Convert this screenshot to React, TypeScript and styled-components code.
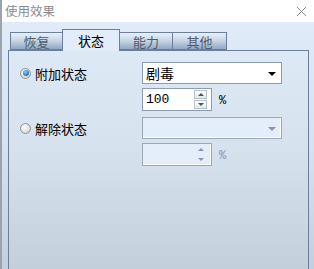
import React from "react";
import styled, { createGlobalStyle } from "styled-components";

const Global = createGlobalStyle`
  html, body { margin: 0; padding: 0; }
  body {
    width: 314px; height: 269px; overflow: hidden;
    font-family: "Noto Sans CJK SC", "Noto Sans", sans-serif;
  }
`;

const Window = styled.div`
  width: 314px;
  height: 269px;
  display: flex;
  flex-direction: column;
  box-sizing: border-box;
  border-left: 2px solid #9aa3ae;
  overflow: hidden;
`;

const TitleBar = styled.div`
  height: 22px;
  flex: none;
  background: #ffffff;
  display: flex;
  align-items: center;
  justify-content: space-between;
  padding: 0 7px 0 3px;
  color: #8a8a8a;
  font-size: 12.5px;
  line-height: 22px;
`;

const Body = styled.div`
  flex: 1;
  background: linear-gradient(#dfebf8 0%, #d6e2ed 50%, #c3d0dc 100%);
  padding: 7px 5px 0 6px;
  display: flex;
  flex-direction: column;
`;

const TabRow = styled.div`
  display: flex;
  align-items: flex-end;
  height: 21px;
  padding-left: 2px;
  position: relative;
  z-index: 1;
`;

const Tab = styled.div<{ $active?: boolean; $w: number }>`
  box-sizing: border-box;
  width: ${(p) => p.$w}px;
  height: ${(p) => (p.$active ? 22 : 18)}px;
  margin-bottom: ${(p) => (p.$active ? -1 : 0)}px;
  margin-left: -1px;
  &:first-child { margin-left: 0; }
  border: 1px solid #6b7f9d;
  border-bottom: ${(p) => (p.$active ? "none" : "1px solid #6b7f9d")};
  background: ${(p) =>
    p.$active
      ? "#e2edf9"
      : "linear-gradient(#e8f0f7 0%, #c9d8e6 45%, #8fa8c2 100%)"};
  color: ${(p) => (p.$active ? "#000" : "#4f5d6e")};
  font-size: 13px;
  display: flex;
  align-items: center;
  justify-content: center;
  line-height: 1;
  position: relative;
  z-index: ${(p) => (p.$active ? 2 : 1)};
`;

const Panel = styled.div`
  flex: 1;
  border: 1px solid #6b7f9d;
  border-bottom: none;
  padding-top: 11px;
  display: flex;
  flex-direction: column;
  gap: 6px;
`;

const Section = styled.div`
  display: grid;
  grid-template-columns: 133px 140px;
  row-gap: 4px;
`;

const RadioLabel = styled.label`
  display: flex;
  align-items: center;
  padding-left: 11px;
  font-size: 13px;
  color: #000;
  gap: 4px;
`;

const RadioDot = styled.span<{ $checked?: boolean }>`
  width: 11px;
  height: 11px;
  box-sizing: border-box;
  border-radius: 50%;
  border: 1px solid #8e949b;
  background: radial-gradient(circle at 40% 35%, #ffffff 0%, #e6e6e6 50%, #c4c4c4 100%);
  display: flex;
  align-items: center;
  justify-content: center;
  &::after {
    content: "";
    display: ${(p) => (p.$checked ? "block" : "none")};
    width: 6px;
    height: 6px;
    border-radius: 50%;
    background: radial-gradient(circle at 40% 35%, #8fd0ff 0%, #2f83d0 55%, #14508f 100%);
  }
`;

const Select = styled.div<{ $disabled?: boolean }>`
  box-sizing: border-box;
  height: 22px;
  border: 1px solid ${(p) => (p.$disabled ? "#9aa8b9" : "#8d9db0")};
  background: ${(p) => (p.$disabled ? "#e3eefa" : "#ffffff")};
  box-shadow: ${(p) => (p.$disabled ? "inset -1px -1px 0 #ffffff" : "none")};
  display: flex;
  align-items: center;
  justify-content: space-between;
  padding: 0 5px 0 3px;
  font-size: 14px;
  color: #000;
`;

const Arrow = styled.span<{ $disabled?: boolean }>`
  width: 0;
  height: 0;
  border-left: 4px solid transparent;
  border-right: 4px solid transparent;
  border-top: 4px solid ${(p) => (p.$disabled ? "#8c90b6" : "#000")};
  margin-top: 1px;
`;

const SpinRow = styled.div`
  grid-column: 2;
  display: flex;
  align-items: center;
  gap: 7px;
`;

const Spin = styled.div<{ $disabled?: boolean }>`
  box-sizing: border-box;
  width: 70px;
  height: 23px;
  border: 1px solid ${(p) => (p.$disabled ? "#9aa8b9" : "#8d9db0")};
  background: ${(p) => (p.$disabled ? "#e3eefa" : "#ffffff")};
  box-shadow: ${(p) => (p.$disabled ? "inset -1px -1px 0 #ffffff" : "none")};
  display: flex;
  align-items: center;
  justify-content: space-between;
  padding: 0 4px 0 3px;
  font-family: "Liberation Mono", monospace;
  font-size: 13px;
  color: #000;
`;

const SpinButtons = styled.div`
  display: flex;
  flex-direction: column;
  gap: 1px;
`;

const SpinBtn = styled.div<{ $disabled?: boolean }>`
  box-sizing: border-box;
  width: 13px;
  height: 9px;
  border: 1px solid ${(p) => (p.$disabled ? "transparent" : "#b8c2cc")};
  background: ${(p) => (p.$disabled ? "transparent" : "linear-gradient(#ffffff, #e4e8ec)")};
  display: flex;
  align-items: center;
  justify-content: center;
`;

const Tri = styled.span<{ $up?: boolean; $disabled?: boolean }>`
  width: 0;
  height: 0;
  border-left: 3px solid transparent;
  border-right: 3px solid transparent;
  ${(p) => (p.$up ? "border-bottom" : "border-top")}: 3px solid ${(p) =>
    p.$disabled ? "#8c90b6" : "#4a5563"};
`;

const Percent = styled.span<{ $disabled?: boolean }>`
  font-family: "Liberation Mono", monospace;
  font-size: 12px;
  color: ${(p) => (p.$disabled ? "#8c90b6" : "#000")};
  margin-top: 2px;
`;

const CloseIcon = () => (
  <svg width="11" height="11" viewBox="0 0 11 11">
    <path d="M1 1 L10 10 M10 1 L1 10" stroke="#8a8a8a" strokeWidth="1" fill="none" />
  </svg>
);

const SpinBox = ({ value, disabled }: { value: string; disabled?: boolean }) => (
  <SpinRow>
    <Spin $disabled={disabled}>
      <span>{value}</span>
      <SpinButtons>
        <SpinBtn $disabled={disabled}><Tri $up $disabled={disabled} /></SpinBtn>
        <SpinBtn $disabled={disabled}><Tri $disabled={disabled} /></SpinBtn>
      </SpinButtons>
    </Spin>
    <Percent $disabled={disabled}>%</Percent>
  </SpinRow>
);

export default function App() {
  return (
    <>
      <Global />
      <Window>
        <TitleBar>
          <span>使用效果</span>
          <CloseIcon />
        </TitleBar>
        <Body>
          <TabRow>
            <Tab $w={53}>恢复</Tab>
            <Tab $w={58} $active>状态</Tab>
            <Tab $w={54}>能力</Tab>
            <Tab $w={55}>其他</Tab>
          </TabRow>
          <Panel>
            <Section>
              <RadioLabel>
                <RadioDot $checked />
                附加状态
              </RadioLabel>
              <Select>
                <span>剧毒</span>
                <Arrow />
              </Select>
              <SpinBox value="100" />
            </Section>
            <Section>
              <RadioLabel>
                <RadioDot />
                解除状态
              </RadioLabel>
              <Select $disabled>
                <span />
                <Arrow $disabled />
              </Select>
              <SpinBox value="" disabled />
            </Section>
          </Panel>
        </Body>
      </Window>
    </>
  );
}
